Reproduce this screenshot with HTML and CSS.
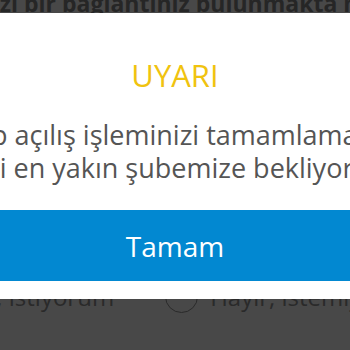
FILE: index.html
```html
<!DOCTYPE html>
<html lang="tr">
<head>
<meta charset="utf-8">
<link rel="stylesheet" href="styles.css">
</head>
<body>
<div class="page">
  <p class="question">Bankamızla sizi bir bağlantınız bulunmakta mıdır?</p>
  <div class="options">
    <label class="option"><span class="radio"></span><span class="opt-text">Evet, istiyorum</span></label>
    <label class="option"><span class="radio"></span><span class="opt-text">Hayır, istemiyorum</span></label>
  </div>
</div>
<div class="dialog">
  <h2 class="title">UYARI</h2>
  <p class="message">Hesap açılış işleminizi tamamlamak için<br>sizi en yakın şubemize bekliyoruz</p>
  <button class="ok">Tamam</button>
</div>
</body>
</html>
```
FILE: styles.css
```css
html, body {
  margin: 0;
  padding: 0;
  width: 350px;
  height: 350px;
  overflow: hidden;
  background: #484848;
  font-family: "Open Sans", "DejaVu Sans", sans-serif;
}
.page {
  position: relative;
  height: 350px;
}
.question {
  margin: -7px 0 0 -159px;
  white-space: nowrap;
  font-weight: 700;
  font-size: 23px;
  line-height: 20px;
  height: 20px;
  color: #262626;
}
.options {
  display: flex;
  align-items: center;
  margin-left: -96px;
  margin-top: 267px;
  gap: 51px;
}
.option {
  display: flex;
  align-items: center;
  gap: 12px;
  color: #2a2a2a;
  font-size: 24px;
  white-space: nowrap;
}
.radio {
  width: 33px;
  height: 33px;
  border: 1px solid #2a2a2a;
  border-radius: 50%;
  box-sizing: border-box;
}
.dialog {
  position: absolute;
  top: 13px;
  left: -200px;
  width: 750px;
  height: 286px;
  background: #fff;
  display: flex;
  flex-direction: column;
  align-items: center;
  padding-top: 42px;
  box-sizing: border-box;
}
.title {
  margin: 0;
  font-size: 31px;
  line-height: 40px;
  font-weight: 400;
  color: #f0c30f;
}
.message {
  margin: 23px 0 0;
  font-size: 27px;
  line-height: 33px;
  color: #555;
  text-align: center;
  white-space: nowrap;
}
.ok {
  margin-top: 26px;
  width: 100%;
  height: 71px;
  border: 0;
  background: #0288d1;
  color: #fff;
  font-family: inherit;
  font-size: 28px;
  padding: 0;
}
```
